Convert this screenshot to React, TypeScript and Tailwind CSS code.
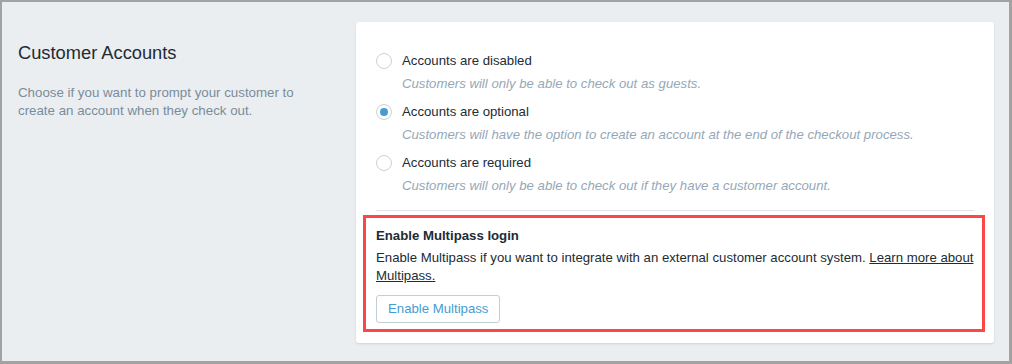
import React from "react";

const font = { fontFamily: '"Liberation Sans", Arial, sans-serif' };

function Radio({ checked }: { checked?: boolean }) {
  return (
    <span className="flex h-4 w-4 shrink-0 items-center justify-center rounded-full border border-[#c9d2da] bg-white">
      {checked && <span className="h-2 w-2 rounded-full bg-[#479ccf]" />}
    </span>
  );
}

const options = [
  { label: "Accounts are disabled", help: "Customers will only be able to check out as guests." },
  {
    label: "Accounts are optional",
    help: "Customers will have the option to create an account at the end of the checkout process.",
    checked: true,
  },
  {
    label: "Accounts are required",
    help: "Customers will only be able to check out if they have a customer account.",
  },
];

export default function App() {
  return (
    <div
      className="box-border flex h-[364px] w-[1012px] border-t-2 border-l-2 border-r-[3px] border-b-[3px] border-[#a2a2a2] bg-[#ebeef0]"
      style={font}
    >
      <div className="w-[354px] shrink-0 pl-4 pt-[40px]">
        <h2 className="text-[18.3px] leading-[22px] text-[#212b35]">Customer Accounts</h2>
        <p className="mt-[20px] w-[300px] text-[13.3px] leading-[17.5px] text-[#798c9c]">
          Choose if you want to prompt your customer to create an account when they check out.
        </p>
      </div>
      <div className="mt-[20px] h-[321px] w-[638px] shrink-0 rounded-[3px] bg-white pt-[29px] shadow-[0_1px_2px_rgba(63,63,68,0.15)]">
        <div className="flex flex-col gap-[8px] px-5">
          {options.map((o) => (
            <div key={o.label} className="flex flex-col gap-[3px]">
              <div className="flex h-5 items-center gap-[10px]">
                <Radio checked={o.checked} />
                <span className="text-[13.2px] text-[#212b35]">{o.label}</span>
              </div>
              <div className="pl-[26px] text-[13.2px] italic leading-5 text-[#95a7b7]">{o.help}</div>
            </div>
          ))}
        </div>
        <div className="mx-5 mt-[14px] h-px bg-[#dfe3e8]" />
        <div className="ml-[7px] mr-[9px] mt-[4px] border-[3px] border-[#fd4646] pb-[6px] pl-[10px] pr-[6px] pt-[8px]">
          <div className="text-[13.2px] font-bold leading-5 text-[#212b35]">Enable Multipass login</div>
          <p className="mt-[3px] text-[13.2px] leading-[18px] text-[#212b35]">
            Enable Multipass if you want to integrate with an external customer account system.{" "}
            <a className="underline" href="#">
              Learn more about Multipass.
            </a>
          </p>
          <button className="mt-[10px] h-[28px] rounded-[3px] border border-[#c4cdd5] bg-white px-[11px] text-[13.2px] text-[#479ccf]">
            Enable Multipass
          </button>
        </div>
      </div>
    </div>
  );
}
